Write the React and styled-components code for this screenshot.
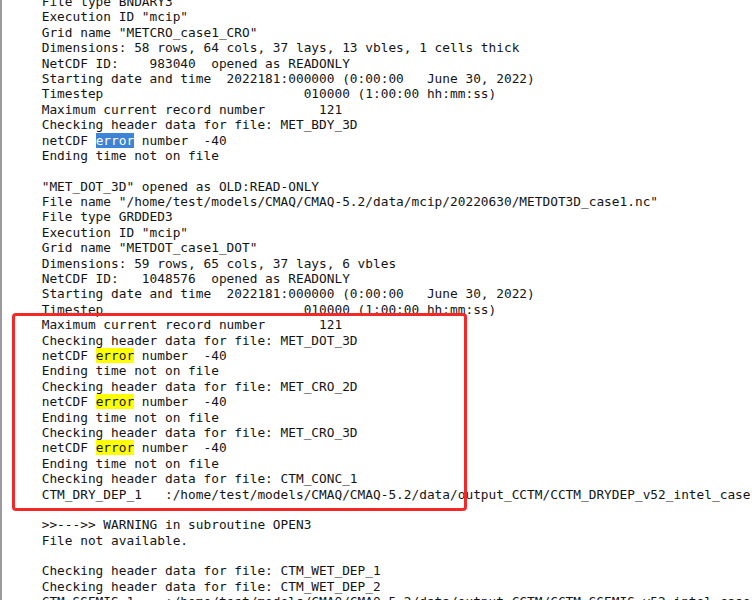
import styled, { createGlobalStyle } from 'styled-components';

const GlobalStyle = createGlobalStyle`
  html, body {
    margin: 0;
    padding: 0;
    background: #ffffff;
  }
`;

const Screen = styled.div`
  position: relative;
  width: 752px;
  height: 600px;
  overflow: hidden;
  background: #ffffff;
  border-left: 2px solid #9b9b9b;
  box-sizing: border-box;
`;

const Output = styled.pre`
  margin: -6px 0 0 0;
  padding: 0 0 0 39.7px;
  font-family: "DejaVu Sans Mono", "Liberation Mono", monospace;
  font-size: 12.8px;
  line-height: 15.4px;
  color: #141414;
  white-space: pre;
`;

const Line = styled.div`
  height: 15.4px;
`;

const Mark = styled.span`
  background: ${({ $kind }) => ($kind === 'selected' ? '#3d84d6' : '#ffff00')};
  color: ${({ $kind }) => ($kind === 'selected' ? '#ffffff' : 'inherit')};
`;

// red annotation drawn over the log
const Callout = styled.div`
  position: absolute;
  left: 10px;
  top: 313px;
  width: 455px;
  height: 198px;
  border: 3px solid #f52828;
  border-radius: 4px;
  box-sizing: border-box;
  pointer-events: none;
`;

const errLine = (kind) => [
  'netCDF ',
  { mark: 'error', kind },
  ' number  -40',
];

const lines = [
  'File type BNDARY3',
  'Execution ID "mcip"',
  'Grid name "METCRO_case1_CRO"',
  'Dimensions: 58 rows, 64 cols, 37 lays, 13 vbles, 1 cells thick',
  'NetCDF ID:    983040  opened as READONLY',
  'Starting date and time  2022181:000000 (0:00:00   June 30, 2022)',
  'Timestep                          010000 (1:00:00 hh:mm:ss)',
  'Maximum current record number       121',
  'Checking header data for file: MET_BDY_3D',
  errLine('selected'),
  'Ending time not on file',
  '',
  '"MET_DOT_3D" opened as OLD:READ-ONLY',
  'File name "/home/test/models/CMAQ/CMAQ-5.2/data/mcip/20220630/METDOT3D_case1.nc"',
  'File type GRDDED3',
  'Execution ID "mcip"',
  'Grid name "METDOT_case1_DOT"',
  'Dimensions: 59 rows, 65 cols, 37 lays, 6 vbles',
  'NetCDF ID:   1048576  opened as READONLY',
  'Starting date and time  2022181:000000 (0:00:00   June 30, 2022)',
  'Timestep                          010000 (1:00:00 hh:mm:ss)',
  'Maximum current record number       121',
  'Checking header data for file: MET_DOT_3D',
  errLine('found'),
  'Ending time not on file',
  'Checking header data for file: MET_CRO_2D',
  errLine('found'),
  'Ending time not on file',
  'Checking header data for file: MET_CRO_3D',
  errLine('found'),
  'Ending time not on file',
  'Checking header data for file: CTM_CONC_1',
  'CTM_DRY_DEP_1   :/home/test/models/CMAQ/CMAQ-5.2/data/output_CCTM/CCTM_DRYDEP_v52_intel_case1.nc',
  '',
  '>>--->> WARNING in subroutine OPEN3',
  'File not available.',
  '',
  'Checking header data for file: CTM_WET_DEP_1',
  'Checking header data for file: CTM_WET_DEP_2',
  'CTM_SSEMIS_1    :/home/test/models/CMAQ/CMAQ-5.2/data/output_CCTM/CCTM_SSEMIS_v52_intel_case1.nc',
];

function LogLine({ content }) {
  if (typeof content === 'string') {
    return <Line>{content || ' '}</Line>;
  }
  return (
    <Line>
      {content.map((part, i) =>
        typeof part === 'string' ? (
          part
        ) : (
          <Mark key={i} $kind={part.kind}>
            {part.mark}
          </Mark>
        )
      )}
    </Line>
  );
}

export default function App() {
  return (
    <>
      <GlobalStyle />
      <Screen>
        <Output>
          {lines.map((l, i) => (
            <LogLine key={i} content={l} />
          ))}
        </Output>
        <Callout />
      </Screen>
    </>
  );
}
